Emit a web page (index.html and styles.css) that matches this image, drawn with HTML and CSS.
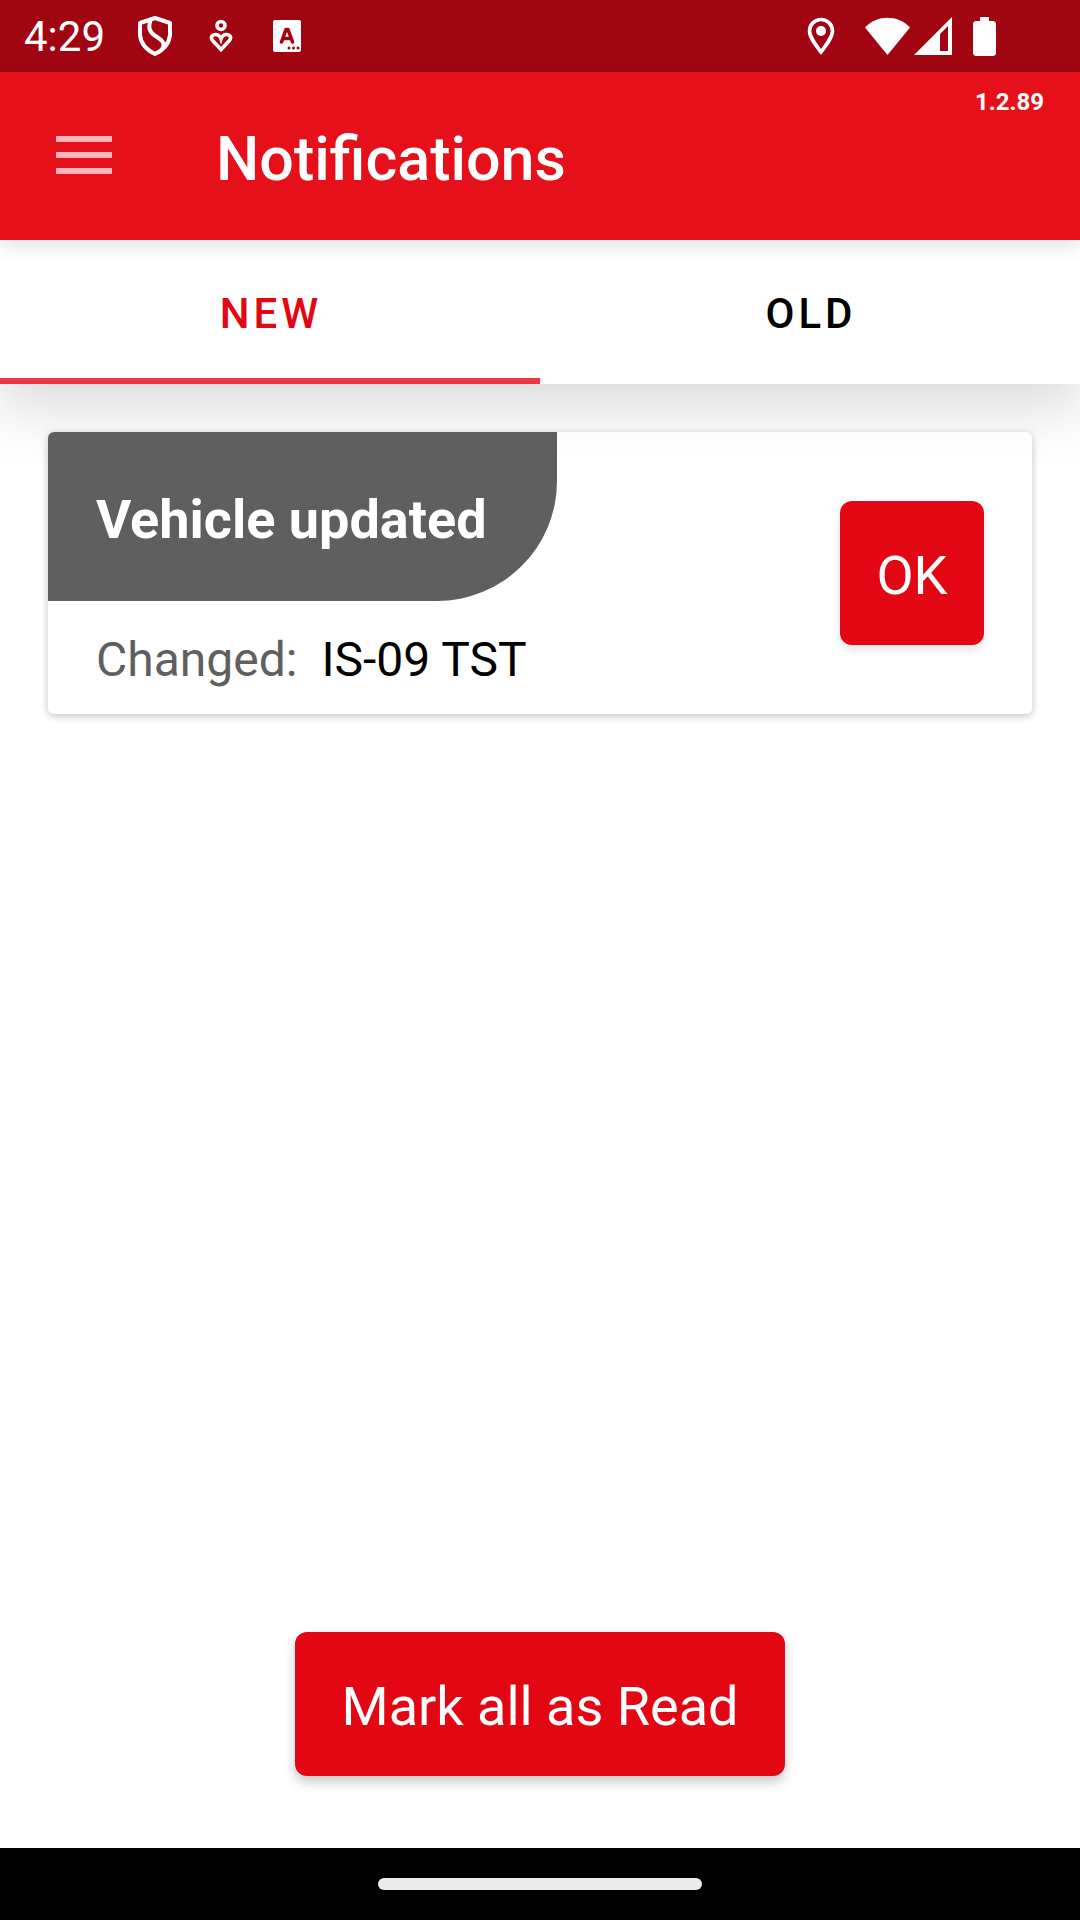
FILE: index.html
```html
<!DOCTYPE html>
<html lang="en">
<head>
<meta charset="utf-8">
<meta name="viewport" content="width=device-width, initial-scale=1">
<title>Notifications</title>
<link rel="stylesheet" href="styles.css">
</head>
<body>
<div class="screen">
  <div class="status-bar">
    <div class="status-left">
      <span class="clock">4:29</span>
      <svg class="icon-shield" viewBox="0 0 34 40" aria-hidden="true"><path d="M17 2 32 7V19Q31 31 17 38Q3 31 2 19V7Z M13 3C10 11 11 15 16 19C24 24 28 27 24 33" fill="none" stroke="#fff" stroke-width="4" stroke-linejoin="round"/></svg>
      <svg class="icon-care" viewBox="0 0 24 34" aria-hidden="true"><g fill="none" stroke="#fff" stroke-width="3.6"><circle cx="12" cy="6.5" r="4"/><path d="M12 30.500 4 22C0.500 18 3.500 15.500 6.500 15.500C9 15.500 11 17 12 20C13 17 15 15.500 17.500 15.500C20.500 15.500 23.500 18 20 22Z"/></g></svg>
      <svg class="icon-letter" viewBox="0 0 28 32" aria-hidden="true"><rect width="28" height="32" rx="2" fill="#fff"/><path d="M8.500 22 13 9.500H15L19.500 22M10 18.500H18" fill="none" stroke="#a10512" stroke-width="3.6" stroke-linejoin="round" stroke-linecap="round"/><g fill="#a10512"><circle cx="16" cy="28" r="1.500"/><circle cx="20.500" cy="28" r="1.500"/><circle cx="25" cy="28" r="1.500"/></g></svg>
    </div>
    <div class="status-right">
      <svg class="icon-pin" viewBox="0 0 28 38" aria-hidden="true"><path d="M14 35C8 27 2.500 20 2.500 14A11.500 11.500 0 0 1 25.500 14C25.500 20 20 27 14 35Z" fill="none" stroke="#fff" stroke-width="3.600"/><circle cx="14" cy="14" r="5" fill="#fff"/></svg>
      <svg class="icon-wifi" viewBox="0 0 45 38" aria-hidden="true"><path d="M0 10.500C12 -2.500 33 -2.500 45 10.500L22.500 38Z" fill="#fff"/></svg>
      <svg class="icon-signal" viewBox="0 0 38 38" aria-hidden="true"><path d="M38 0V38H0ZM34 9 26 17V34H34Z" fill="#fff" fill-rule="evenodd"/></svg>
      <svg class="icon-battery" viewBox="0 0 23 39" aria-hidden="true"><path d="M7 0H16V4H21L23 6V37L21 39H2L0 37V6L2 4H7Z" fill="#fff"/></svg>
    </div>
  </div>
  <header class="app-bar">
    <button class="menu" type="button" aria-label="Menu"><span></span><span></span><span></span></button>
    <h1 class="title">Notifications</h1>
    <span class="version">1.2.89</span>
  </header>
  <nav class="tabs">
    <button class="tab tab-active" type="button">NEW</button>
    <button class="tab" type="button">OLD</button>
  </nav>
  <main class="content">
    <article class="card">
      <div class="card-info">
        <h2 class="card-title">Vehicle updated</h2>
        <p class="card-detail"><span class="label">Changed:</span><span>IS-09 TST</span></p>
      </div>
      <button class="btn btn-ok" type="button">OK</button>
    </article>
    <button class="btn btn-all" type="button">Mark all as Read</button>
  </main>
  <div class="nav-bar"><div class="nav-handle"></div></div>
</div>
</body>
</html>
```
FILE: styles.css
```css
* {
  box-sizing: border-box;
}

body {
  margin: 0;
  background: #fff;
  color: #000;
  font-family: Roboto, "Liberation Sans", sans-serif;
}

button {
  margin: 0;
  padding: 0;
  border: 0;
  background: none;
  font: inherit;
  color: inherit;
}

h1,
h2,
p {
  margin: 0;
}

svg {
  display: block;
}

.screen {
  display: flex;
  flex-direction: column;
  min-height: 100vh;
}

/* System status bar */
.status-bar {
  display: flex;
  justify-content: space-between;
  height: 72px;
  padding: 0 84px 0 24px;
  background: #a10512;
  color: #fff;
}

.status-left,
.status-right {
  display: flex;
  align-items: center;
}

.clock {
  margin-right: 33px;
  padding-top: 2px;
  font-size: 42px;
  line-height: 70px;
}

.icon-shield {
  width: 34px;
  height: 40px;
  margin-right: 37px;
}

.icon-care {
  width: 24px;
  height: 34px;
  margin-right: 40px;
}

.icon-letter {
  width: 28px;
  height: 32px;
}

.icon-pin {
  width: 28px;
  height: 38px;
  margin-right: 30px;
}

.icon-wifi {
  width: 45px;
  height: 38px;
  margin-right: 4px;
}

.icon-signal {
  width: 38px;
  height: 38px;
  margin-right: 21px;
}

.icon-battery {
  width: 23px;
  height: 39px;
}

/* App bar */
.app-bar {
  position: relative;
  z-index: 2;
  display: flex;
  align-items: center;
  height: 168px;
  padding: 0 36px 0 56px;
  background: #e6101b;
  color: #fff;
  box-shadow: 0 6px 18px rgba(0, 0, 0, 0.12);
}

.menu {
  display: flex;
  flex-direction: column;
  gap: 10px;
  width: 56px;
  margin-right: 104px;
  padding-bottom: 2px;
}

.menu span {
  height: 6px;
  background: #f9b7bb;
}

.title {
  flex: 1;
  padding-top: 5px;
  font-size: 61px;
  line-height: 72px;
  font-weight: 500;
}

.version {
  align-self: flex-start;
  padding-top: 16px;
  font-size: 24px;
  line-height: 28px;
  font-weight: 700;
}

/* Tabs */
.tabs {
  position: relative;
  display: grid;
  grid-template-columns: 1fr 1fr;
  height: 144px;
  background: #fff;
  box-shadow: 0 22px 60px 4px rgba(0, 0, 0, 0.14);
}

.tab {
  padding-top: 8px;
  padding-left: 2px;
  border-bottom: 6px solid transparent;
  font-size: 42px;
  font-weight: 500;
  letter-spacing: 4px;
}

.tab-active {
  border-bottom-color: #eb3640;
  color: #e30613;
}

/* Notification list */
.content {
  position: relative;
  flex: 1;
  display: flex;
  flex-direction: column;
  justify-content: space-between;
  padding: 48px 48px 72px;
}

.card {
  display: flex;
  align-items: center;
  justify-content: space-between;
  padding-right: 48px;
  border-radius: 6px;
  background: rgba(255, 255, 255, 0.5);
  box-shadow: 0 2px 8px rgba(0, 0, 0, 0.24);
}

.card-info {
  display: flex;
  flex-direction: column;
  align-items: flex-start;
}

.card-title {
  padding: 56px 70px 49px 48px;
  border-radius: 6px 0 120px 0;
  background: #5f5f5f;
  color: #fff;
  font-size: 54px;
  line-height: 64px;
  font-weight: 700;
}

.card-detail {
  display: flex;
  gap: 24px;
  padding: 31px 48px 26px;
  font-size: 48px;
  line-height: 56px;
}

.label {
  color: #5f5f5f;
}

.btn {
  height: 144px;
  padding-top: 4px;
  border-radius: 12px;
  background: #e30613;
  color: #fff;
  font-size: 54px;
}

.btn-ok {
  width: 144px;
  box-shadow: 0 4px 10px rgba(0, 0, 0, 0.12);
}

.btn-all {
  align-self: center;
  padding-right: 47px;
  padding-left: 47px;
  box-shadow: 0 6px 12px rgba(0, 0, 0, 0.22);
}

/* System gesture bar */
.nav-bar {
  display: flex;
  align-items: center;
  justify-content: center;
  height: 72px;
  background: #000;
}

.nav-handle {
  width: 30%;
  height: 12px;
  border-radius: 6px;
  background: #ebebeb;
}
```
